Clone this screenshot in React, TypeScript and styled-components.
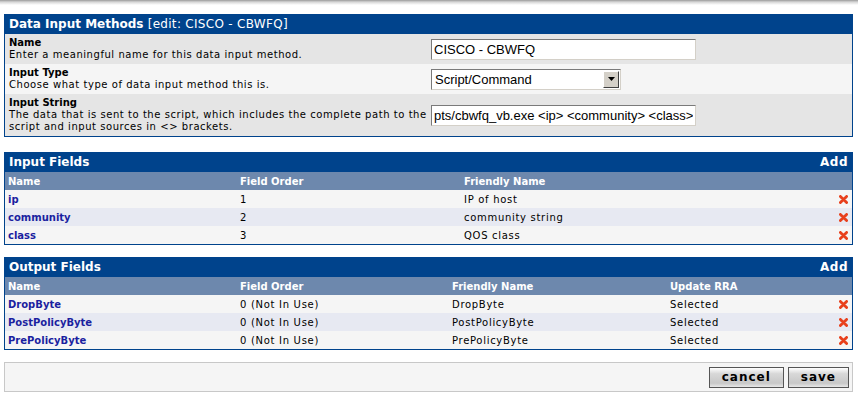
import React from 'react'
import styled, {createGlobalStyle} from 'styled-components'

const GlobalStyle = createGlobalStyle`
  body {
    margin: 0;
    background: #ffffff;
    font-family: "DejaVu Sans", Verdana, sans-serif;
    font-size: 10px;
    color: #000;
  }
`

const colors = {
    Header: '#00438C',
    ColHeader: '#6D88AD',
    RowLight: '#F5F5F5',
    RowBlue: '#E7E9F2',
    FormDark: '#E5E5E5',
    Link: '#1B1FA0',
    Red: '#E8401C',
}

type InputRow = { name: string, order: string, friendly: string }
type OutputRow = InputRow & { rra: string }

const inputFields: InputRow[] = [
    {name: 'ip', order: '1', friendly: 'IP of host'},
    {name: 'community', order: '2', friendly: 'community string'},
    {name: 'class', order: '3', friendly: 'QOS class'},
]

const outputFields: OutputRow[] = [
    {name: 'DropByte', order: '0 (Not In Use)', friendly: 'DropByte', rra: 'Selected'},
    {name: 'PostPolicyByte', order: '0 (Not In Use)', friendly: 'PostPolicyByte', rra: 'Selected'},
    {name: 'PrePolicyByte', order: '0 (Not In Use)', friendly: 'PrePolicyByte', rra: 'Selected'},
]

const DeleteIcon = () => (
    <svg width="9" height="9" viewBox="0 0 9 9">
        <path d="M1.4 1.4 L7.6 7.6 M7.6 1.4 L1.4 7.6" stroke={colors.Red} strokeWidth="2.8" strokeLinecap="round"/>
    </svg>
)

export default function App() {
    return (
        <>
            <GlobalStyle/>
            <TopShade/>
            <Page>
                <Panel gap={15}>
                    <PanelHeader>
                        <span><b>Data Input Methods</b> <Plain>[edit: CISCO - CBWFQ]</Plain></span>
                    </PanelHeader>
                    <FormRow shade={colors.FormDark}>
                        <FormLabel>
                            <b>Name</b>
                            <div>Enter a meaningful name for this data input method.</div>
                        </FormLabel>
                        <FormField>
                            <TextInput width={265} defaultValue="CISCO - CBWFQ"/>
                        </FormField>
                    </FormRow>
                    <FormRow shade={colors.RowLight}>
                        <FormLabel>
                            <b>Input Type</b>
                            <div>Choose what type of data input method this is.</div>
                        </FormLabel>
                        <FormField>
                            <SelectBox>
                                <span>Script/Command</span>
                                <SelectArrow>
                                    <svg width="7" height="4" viewBox="0 0 7 4">
                                        <path d="M0 0 H7 L3.5 4 Z" fill="#000"/>
                                    </svg>
                                </SelectArrow>
                            </SelectBox>
                        </FormField>
                    </FormRow>
                    <FormRow shade={colors.FormDark}>
                        <FormLabel>
                            <b>Input String</b>
                            <div>The data that is sent to the script, which includes the complete path to the script and input sources in &lt;&gt; brackets.</div>
                        </FormLabel>
                        <FormField>
                            <TextInput width={265} defaultValue="pts/cbwfq_vb.exe <ip> <community> <class>"/>
                        </FormField>
                    </FormRow>
                </Panel>

                <Panel gap={12}>
                    <PanelHeader>
                        <span>Input Fields</span>
                        <AddLink>Add</AddLink>
                    </PanelHeader>
                    <ListRow cols="232px 224px 1fr 14px" shade={colors.ColHeader}>
                        <ColTitle>Name</ColTitle>
                        <ColTitle>Field Order</ColTitle>
                        <ColTitle>Friendly Name</ColTitle>
                        <span/>
                    </ListRow>
                    {inputFields.map((r, i) => (
                        <ListRow key={r.name} cols="232px 224px 1fr 14px" shade={i % 2 ? colors.RowBlue : colors.RowLight}>
                            <NameLink>{r.name}</NameLink>
                            <Cell>{r.order}</Cell>
                            <Cell>{r.friendly}</Cell>
                            <DeleteIcon/>
                        </ListRow>
                    ))}
                </Panel>

                <Panel gap={12}>
                    <PanelHeader>
                        <span>Output Fields</span>
                        <AddLink>Add</AddLink>
                    </PanelHeader>
                    <ListRow cols="232px 212px 218px 1fr 14px" shade={colors.ColHeader}>
                        <ColTitle>Name</ColTitle>
                        <ColTitle>Field Order</ColTitle>
                        <ColTitle>Friendly Name</ColTitle>
                        <ColTitle>Update RRA</ColTitle>
                        <span/>
                    </ListRow>
                    {outputFields.map((r, i) => (
                        <ListRow key={r.name} cols="232px 212px 218px 1fr 14px" shade={i % 2 ? colors.RowBlue : colors.RowLight}>
                            <NameLink>{r.name}</NameLink>
                            <Cell>{r.order}</Cell>
                            <Cell>{r.friendly}</Cell>
                            <Cell>{r.rra}</Cell>
                            <DeleteIcon/>
                        </ListRow>
                    ))}
                </Panel>

                <SaveBar>
                    <Button>cancel</Button>
                    <Button>save</Button>
                </SaveBar>
            </Page>
        </>
    )
}

const TopShade = styled.div`
  height: 5px;
  background: linear-gradient(#9a9a9a, #d6d6d6 40%, #ffffff);
`

const Page = styled.div`
  padding: 9px 5px 0 4px;
`

const Panel = styled.div<{ gap: number }>`
  border: 1px solid ${colors.Header};
  border-top: none;
  margin-bottom: ${({gap}) => gap}px;
`

const PanelHeader = styled.div`
  display: flex;
  justify-content: space-between;
  align-items: center;
  height: 20px;
  padding: 0 4px;
  background: ${colors.Header};
  color: #fff;
  font-size: 12px;
  font-weight: bold;
`

const Plain = styled.span`
  font-weight: normal;
  letter-spacing: 0.3px;
`

const AddLink = styled.span`
  font-weight: bold;
  letter-spacing: 0.5px;
`

const FormRow = styled.div<{ shade: string }>`
  display: grid;
  grid-template-columns: 426px 1fr;
  align-items: center;
  background: ${({shade}) => shade};
`

const FormLabel = styled.div`
  padding: 3px 0 3px 4px;
  line-height: 12px;
  font-size: 10px;

  div {
    letter-spacing: 0.55px;
  }
`

const FormField = styled.div`
  display: flex;
  align-items: center;
`

const TextInput = styled.input<{ width: number }>`
  box-sizing: border-box;
  width: ${({width}) => width}px;
  height: 21px;
  padding: 1px 2px;
  border: 1px solid #7a7a7a;
  border-right-color: #d4d0c8;
  border-bottom-color: #d4d0c8;
  background: #fff;
  font-family: "Liberation Sans", Arial, sans-serif;
  font-size: 13px;
  color: #000;
  outline: none;
`

const SelectBox = styled.div`
  box-sizing: border-box;
  display: flex;
  align-items: center;
  justify-content: space-between;
  width: 190px;
  height: 21px;
  padding-left: 3px;
  border: 1px solid #7a7a7a;
  border-right-color: #d4d0c8;
  border-bottom-color: #d4d0c8;
  background: #fff;
  font-family: "Liberation Sans", Arial, sans-serif;
  font-size: 13px;
`

const SelectArrow = styled.div`
  box-sizing: border-box;
  display: flex;
  align-items: center;
  justify-content: center;
  width: 16px;
  height: 17px;
  margin-right: 1px;
  background: #d4d0c8;
  border: 1px solid;
  border-color: #fff #404040 #404040 #fff;
`

const ListRow = styled.div<{ cols: string, shade: string }>`
  display: grid;
  grid-template-columns: ${({cols}) => cols};
  align-items: center;
  height: 18px;
  padding: 0 4px 0 3px;
  background: ${({shade}) => shade};
  font-size: 10px;

  svg {
    justify-self: end;
  }
`

const Cell = styled.span`
  letter-spacing: 0.7px;
`

const ColTitle = styled.span`
  color: #fff;
  font-weight: bold;
`

const NameLink = styled.span`
  color: ${colors.Link};
  font-weight: bold;
`

const SaveBar = styled.div`
  display: flex;
  justify-content: flex-end;
  align-items: center;
  gap: 4px;
  height: 28px;
  padding-right: 3px;
  border: 1px solid #c8c8c8;
  background: #f5f5f5;
`

const Button = styled.button`
  height: 21px;
  padding: 0 12px;
  border: 1px solid #555;
  background: linear-gradient(#ffffff, #d8d8d8 30%, #c8c8c8 80%, #e8e8e8);
  font-family: "DejaVu Sans", Verdana, sans-serif;
  font-size: 12px;
  font-weight: bold;
  letter-spacing: 1px;
  color: #000;
`
